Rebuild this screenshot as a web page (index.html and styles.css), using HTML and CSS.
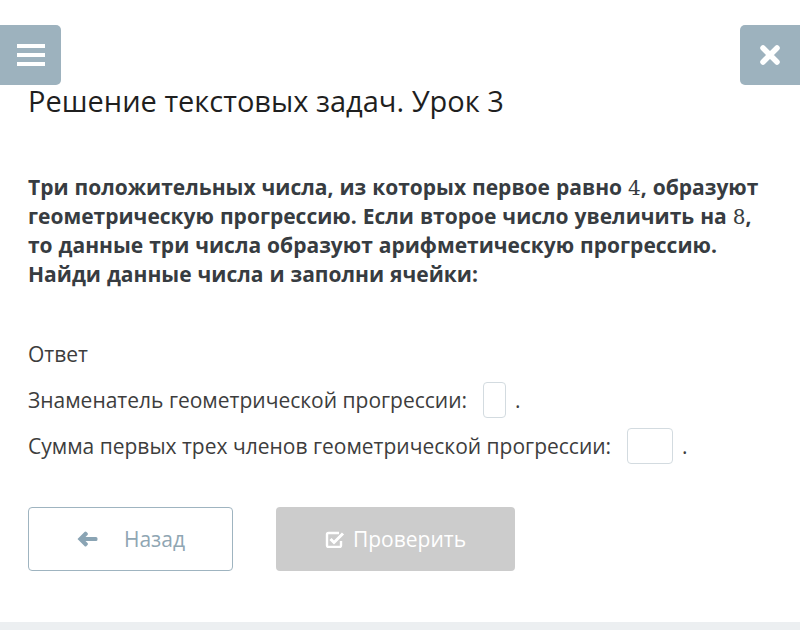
FILE: index.html
```html
<!DOCTYPE html>
<html lang="ru">
<head>
    <meta charset="UTF-8">
    <meta name="viewport" content="width=device-width, initial-scale=1.0">
    <title>Решение текстовых задач. Урок 3</title>
    <link rel="stylesheet" href="styles.css">
</head>
<body>
    <div class="top-bar">
        <button class="icon-btn menu-btn" aria-label="Меню">
            <svg width="28" height="24" viewBox="0 0 28 24">
                <rect x="0" y="1" width="28" height="4" fill="#fff"/>
                <rect x="0" y="10" width="28" height="4" fill="#fff"/>
                <rect x="0" y="19" width="28" height="4" fill="#fff"/>
            </svg>
        </button>
        <button class="icon-btn close-btn" aria-label="Закрыть">
            <svg width="22" height="22" viewBox="0 0 22 22">
                <path d="M4 4 L18 18 M18 4 L4 18" stroke="#fff" stroke-width="5.5" stroke-linecap="round"/>
            </svg>
        </button>
    </div>

    <div class="content">
        <h1 class="title">Решение текстовых задач. Урок 3</h1>

        <p class="task">Три положительных числа, из которых первое равно <span class="math">4</span>, образуют геометрическую прогрессию. Если второе число увеличить на <span class="math">8</span>, то данные три числа образуют арифметическую прогрессию. Найди данные числа и заполни ячейки:</p>

        <div class="answer">
            <div class="answer-row">Ответ</div>
            <div class="answer-row">Знаменатель геометрической прогрессии: <span class="cell small"></span> .</div>
            <div class="answer-row">Сумма первых трех членов геометрической прогрессии: <span class="cell wide"></span> .</div>
        </div>

        <div class="actions">
            <button class="btn btn-back">
                <svg width="22" height="18" viewBox="0 0 22 18">
                    <path d="M1.5 9 L8.5 2 Q9.5 1 10.5 2 L11.5 3 Q12.5 4 11.5 5 L9.5 7 H20 Q21.5 7 21.5 8.5 V9.5 Q21.5 11 20 11 H9.5 L11.5 13 Q12.5 14 11.5 15 L10.5 16 Q9.5 17 8.5 16 Z" fill="#8aa4b4"/>
                </svg>
                <span>Назад</span>
            </button>
            <button class="btn btn-check">
                <svg width="20" height="18" viewBox="0 0 20 18">
                    <path d="M14 3 H3.5 Q2 3 2 4.5 V15.5 Q2 17 3.5 17 H14.5 Q16 17 16 15.5 V11" fill="none" stroke="#fff" stroke-width="2.4"/>
                    <path d="M5.5 9 L9 12.5 L18 3.5" fill="none" stroke="#fff" stroke-width="3"/>
                </svg>
                <span>Проверить</span>
            </button>
        </div>
    </div>

    <div class="bottom-strip"></div>
</body>
</html>
```

FILE: styles.css
```css
body {
    margin: 0;
    font-family: "Open Sans", Arial, sans-serif;
    color: #333;
    background: #fff;
    width: 800px;
    height: 630px;
    overflow: hidden;
    display: flex;
    flex-direction: column;
}
.top-bar {
    display: flex;
    justify-content: space-between;
    padding-top: 25px;
}
.icon-btn {
    width: 61px;
    height: 60px;
    border: none;
    background-color: #9db2be;
    border-radius: 5px;
    display: flex;
    align-items: center;
    justify-content: center;
    padding: 0;
}
.menu-btn {
    border-top-left-radius: 0;
    border-bottom-left-radius: 0;
}
.close-btn {
    width: 60px;
    border-top-right-radius: 0;
    border-bottom-right-radius: 0;
}
.content {
    padding: 0 28px;
    flex: 1;
}
.title {
    font-size: 29px;
    font-weight: normal;
    color: #1f1f1f;
    line-height: 34px;
    margin: -1px 0 0;
}
.task {
    font-size: 21px;
    font-weight: bold;
    line-height: 29px;
    color: #373c41;
    margin: 55px 0 0;
    word-spacing: 0.5px;
}
.math {
    font-family: "DejaVu Serif", "Liberation Serif", serif;
    font-weight: normal;
    font-size: 20px;
    line-height: 1;
}
.answer {
    margin-top: 42px;
    font-size: 21px;
    color: #3d3d3d;
}
.answer-row {
    height: 46px;
    display: flex;
    align-items: center;
    white-space: pre;
}
.cell {
    display: inline-block;
    height: 34px;
    border: 1px solid #d3dbe0;
    border-radius: 4px;
    margin: 0 4px 0 10px;
}
.cell.small {
    width: 21px;
}
.cell.wide {
    width: 44px;
}
.actions {
    display: flex;
    gap: 43px;
    margin-top: 38px;
}
.btn {
    height: 64px;
    border-radius: 4px;
    font-family: "Open Sans", Arial, sans-serif;
    font-size: 21px;
    display: flex;
    align-items: center;
    justify-content: center;
}
.btn-back {
    width: 205px;
    background: #fff;
    border: 1px solid #9fb4c0;
    color: #8fa6b3;
    gap: 26px;
}
.btn-check {
    width: 239px;
    background: #cccccc;
    border: none;
    color: #fff;
    gap: 8px;
}
.bottom-strip {
    height: 8px;
    background: #eceff1;
}
```
